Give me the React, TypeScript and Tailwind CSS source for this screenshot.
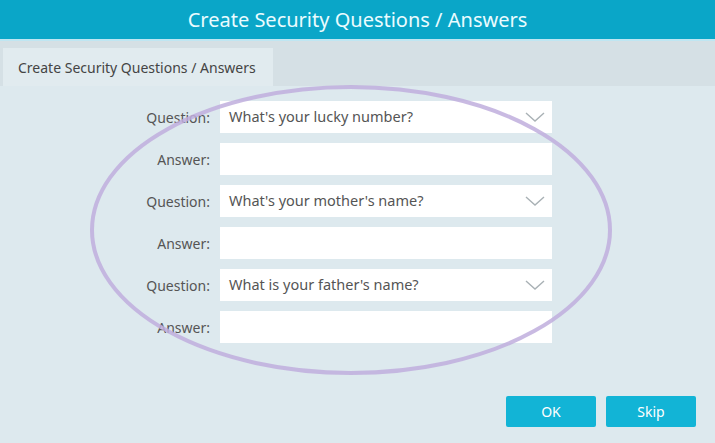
const rows = [
  { question: "What's your lucky number?" },
  { question: "What's your mother's name?" },
  { question: "What is your father's name?" },
];

function Label({ text }: { text: string }) {
  return <div className="w-[220px] shrink-0 pr-[10px] text-right text-[14px] text-[#555]">{text}</div>;
}

function Chevron() {
  return (
    <svg width="20" height="12" viewBox="0 0 20 12" className="mr-[7px]">
      <path d="M1 2 L10 10 L19 2" fill="none" stroke="#a9b1b5" strokeWidth="1.4" />
    </svg>
  );
}

export default function App() {
  return (
    <div
      className="relative w-[715px] h-[443px] overflow-hidden bg-[#dde9ee]"
      style={{ fontFamily: '"Noto Sans", "Open Sans", sans-serif' }}
    >
      {/* title bar */}
      <div className="h-[41px] bg-[#0aa6c8] flex items-center justify-center text-[20px] text-[#eafcff] border-b-2 border-[#bfe6f2]">
        Create Security Questions / Answers
      </div>

      {/* tab strip */}
      <div className="h-[45px] bg-[#d5e0e5] flex items-end pl-[3px]">
        <div className="h-[38px] w-[270px] bg-[#e1ebef] flex items-center pl-[15px] text-[14px] text-[#444]">
          Create Security Questions / Answers
        </div>
      </div>

      {/* form */}
      <div className="flex flex-col gap-[10px] pt-[15px]">
        {rows.map((r, i) => (
          <div key={i} className="flex flex-col gap-[10px]">
            <div className="flex items-center">
              <Label text="Question:" />
              <div className="w-[332px] h-[32px] bg-white flex items-center justify-between pl-[9px] text-[14.5px] text-[#555]">
                <span>{r.question}</span>
                <Chevron />
              </div>
            </div>
            <div className="flex items-center">
              <Label text="Answer:" />
              <div className="w-[332px] h-[32px] bg-white" />
            </div>
          </div>
        ))}
      </div>

      {/* buttons */}
      <div className="flex justify-end gap-[10px] pr-[19px] pt-[53px]">
        <button className="w-[90px] h-[31px] bg-[#12b4d6] text-white text-[14px] rounded-[2px]">OK</button>
        <button className="w-[90px] h-[31px] bg-[#12b4d6] text-white text-[14px] rounded-[2px]">Skip</button>
      </div>

      {/* hand-drawn highlight ellipse */}
      <svg className="absolute inset-0 pointer-events-none" width="715" height="443">
        <ellipse
          cx="351"
          cy="230"
          rx="259"
          ry="143"
          fill="none"
          stroke="#bfaedd"
          strokeOpacity="0.85"
          strokeWidth="4"
        />
      </svg>
    </div>
  );
}
